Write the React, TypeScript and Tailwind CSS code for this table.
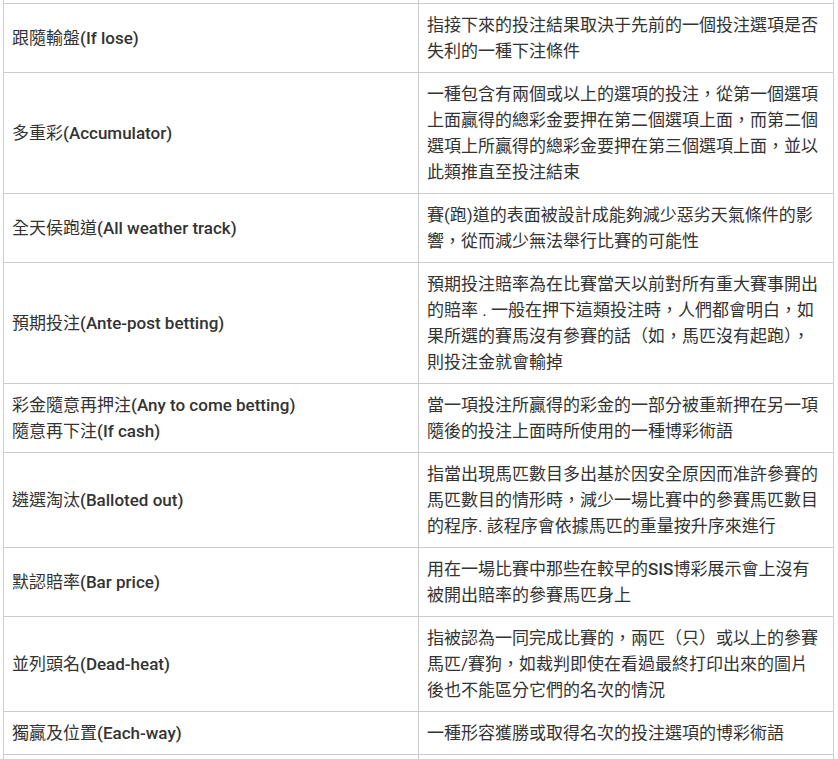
import React from "react";

// Latin parts look a touch heavier than the CJK text in the reference
const L = ({ children }: { children: React.ReactNode }) => (
  <span className="font-medium">{children}</span>
);

const rows: { term: React.ReactNode; desc: React.ReactNode }[] = [
  {
    term: (
      <>
        跟隨輸盤<L>(If lose)</L>
      </>
    ),
    desc: (
      <>
        指接下來的投注結果取決于先前的一個投注選項是否
        <br />
        失利的一種下注條件
      </>
    ),
  },
  {
    term: (
      <>
        多重彩<L>(Accumulator)</L>
      </>
    ),
    desc: (
      <>
        一種包含有兩個或以上的選項的投注，從第一個選項
        <br />
        上面贏得的總彩金要押在第二個選項上面，而第二個
        <br />
        選項上所贏得的總彩金要押在第三個選項上面，並以
        <br />
        此類推直至投注結束
      </>
    ),
  },
  {
    term: (
      <>
        全天侯跑道<L>(All weather track)</L>
      </>
    ),
    desc: (
      <>
        賽(跑)道的表面被設計成能夠減少惡劣天氣條件的影
        <br />
        響，從而減少無法舉行比賽的可能性
      </>
    ),
  },
  {
    term: (
      <>
        預期投注<L>(Ante-post betting)</L>
      </>
    ),
    desc: (
      <>
        預期投注賠率為在比賽當天以前對所有重大賽事開出
        <br />
        的賠率 . 一般在押下這類投注時，人們都會明白，如
        <br />
        果所選的賽馬沒有參賽的話（如，馬匹沒有起跑），
        <br />
        則投注金就會輸掉
      </>
    ),
  },
  {
    term: (
      <>
        彩金隨意再押注<L>(Any to come betting)</L>
        <br />
        隨意再下注<L>(If cash)</L>
      </>
    ),
    desc: (
      <>
        當一項投注所贏得的彩金的一部分被重新押在另一項
        <br />
        隨後的投注上面時所使用的一種博彩術語
      </>
    ),
  },
  {
    term: (
      <>
        遴選淘汰<L>(Balloted out)</L>
      </>
    ),
    desc: (
      <>
        指當出現馬匹數目多出基於因安全原因而准許參賽的
        <br />
        馬匹數目的情形時，減少一場比賽中的參賽馬匹數目
        <br />
        的程序. 該程序會依據馬匹的重量按升序來進行
      </>
    ),
  },
  {
    term: (
      <>
        默認賠率<L>(Bar price)</L>
      </>
    ),
    desc: (
      <>
        用在一場比賽中那些在較早的<L>SIS</L>博彩展示會上沒有
        <br />
        被開出賠率的參賽馬匹身上
      </>
    ),
  },
  {
    term: (
      <>
        並列頭名<L>(Dead-heat)</L>
      </>
    ),
    desc: (
      <>
        指被認為一同完成比賽的，兩匹（只）或以上的參賽
        <br />
        馬匹/賽狗，如裁判即使在看過最終打印出來的圖片
        <br />
        後也不能區分它們的名次的情況
      </>
    ),
  },
  {
    term: (
      <>
        獨贏及位置<L>(Each-way)</L>
      </>
    ),
    desc: "一種形容獲勝或取得名次的投注選項的博彩術語",
  },
  { term: "\u00a0", desc: "\u00a0" },
];

export default function App() {
  return (
    <div className="h-[759px] w-[838px] overflow-hidden bg-white">
      <table className="ml-[3px] mt-[-40px] w-[830px] table-fixed border-collapse font-['Roboto','Noto_Sans_CJK_TC',sans-serif] text-[17px] leading-[26px] text-[#333333]">
        <colgroup>
          <col className="w-[415px]" />
          <col className="w-[415px]" />
        </colgroup>
        <tbody>
          <tr>
            <td className="border border-[#cccccc] px-2 py-2">&nbsp;</td>
            <td className="border border-[#cccccc] px-2 py-2">&nbsp;</td>
          </tr>
          {rows.map((r, i) => (
            <tr key={i}>
              <td className="border border-[#cccccc] px-2 py-2 align-middle">{r.term}</td>
              <td className="border border-[#cccccc] px-2 py-2 align-middle">{r.desc}</td>
            </tr>
          ))}
        </tbody>
      </table>
    </div>
  );
}
